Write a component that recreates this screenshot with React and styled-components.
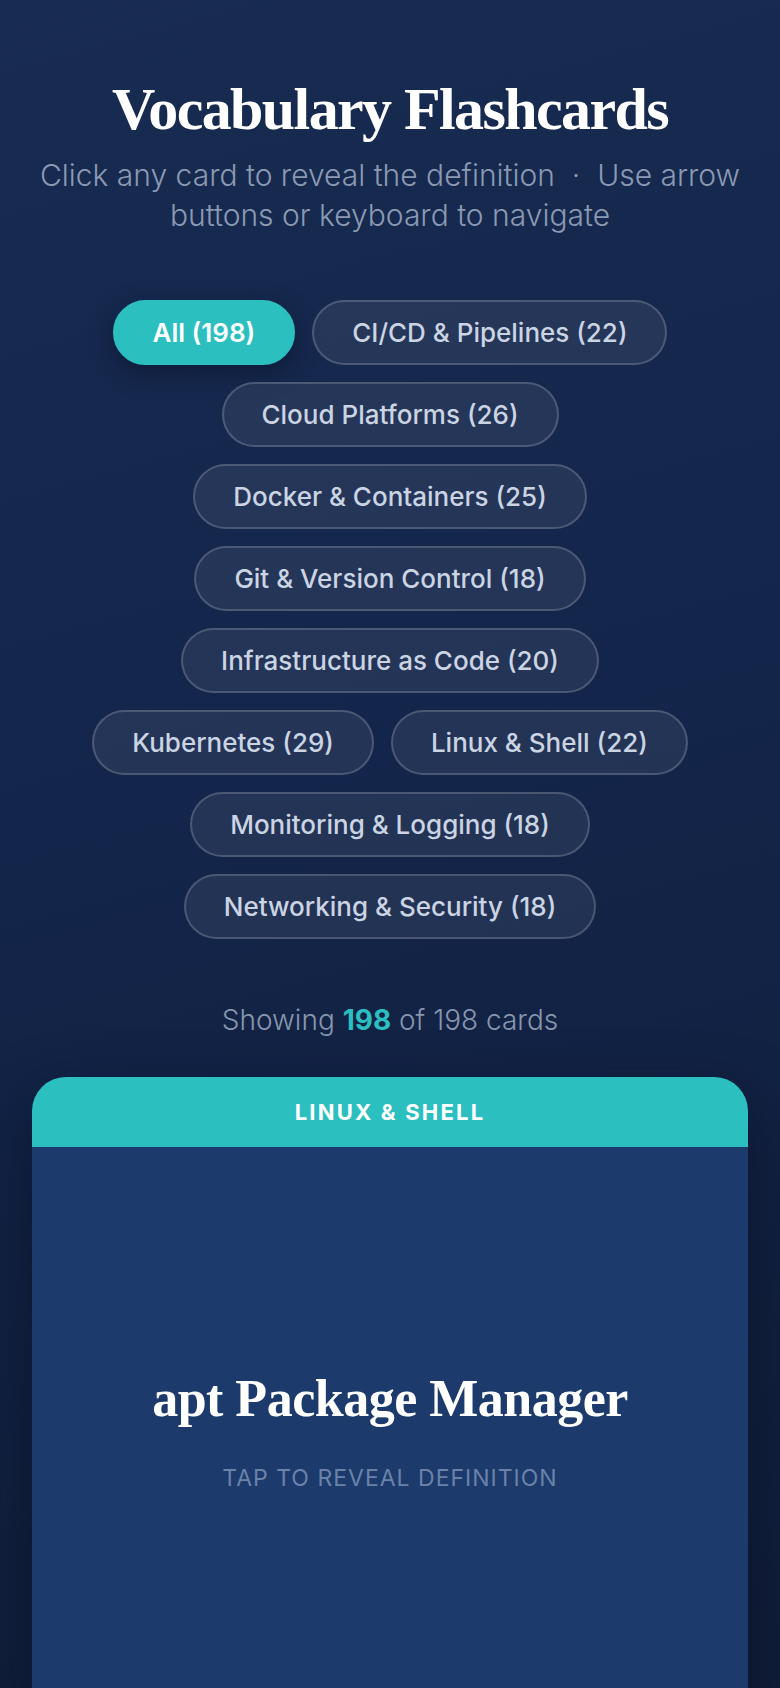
import React, { useState } from 'react';
import styled, { createGlobalStyle } from 'styled-components';

const GlobalStyle = createGlobalStyle`
 * {
  box-sizing: border-box;
 }
 html,
 body {
  margin: 0;
  padding: 0;
 }
 body {
  min-height: 100vh;
  background: linear-gradient(165deg, #182b51 0%, #13254a 45%, #101d38 100%);
  font-family: 'Inter', 'Liberation Sans', sans-serif;
  color: #fff;
 }
`;

const categories = [
 { name: 'CI/CD & Pipelines', count: 22 },
 { name: 'Cloud Platforms', count: 26 },
 { name: 'Docker & Containers', count: 25 },
 { name: 'Git & Version Control', count: 18 },
 { name: 'Infrastructure as Code', count: 20 },
 { name: 'Kubernetes', count: 29 },
 { name: 'Linux & Shell', count: 22 },
 { name: 'Monitoring & Logging', count: 18 },
 { name: 'Networking & Security', count: 18 },
];

const App = () => {
 const [active, setActive] = useState('All');
 const total = categories.reduce((sum, c) => sum + c.count, 0);

 return (
  <>
   <GlobalStyle />
   <Page>
    <Header>
     <Title>Vocabulary Flashcards</Title>
     <Subtitle>
      Click any card to reveal the definition &nbsp;·&nbsp; Use arrow buttons or keyboard to navigate
     </Subtitle>
    </Header>

    <Filters>
     <Chip $active={active === 'All'} onClick={() => setActive('All')}>
      All ({total})
     </Chip>
     {categories.map((c) => (
      <Chip key={c.name} $active={active === c.name} onClick={() => setActive(c.name)}>
       {c.name} ({c.count})
      </Chip>
     ))}
    </Filters>

    <Counter>
     Showing <strong>{total}</strong> of {total} cards
    </Counter>

    <Card>
     <CardTag>Linux &amp; Shell</CardTag>
     <CardBody>
      <Term>apt Package Manager</Term>
      <Hint>Tap to reveal definition</Hint>
     </CardBody>
    </Card>
   </Page>
  </>
 );
};

const Page = styled.main`
 padding: 75px 32px 0;
 display: flex;
 flex-direction: column;
 align-items: center;
`;

const Header = styled.header`
 text-align: center;
 display: flex;
 flex-direction: column;
 align-items: center;
 gap: 12px;
`;

const Title = styled.h1`
 margin: 0;
 font-family: 'Liberation Serif', 'DejaVu Serif', serif;
 font-weight: 700;
 font-size: 60px;
 line-height: 68px;
 letter-spacing: -1.6px;
 color: #ffffff;
`;

const Subtitle = styled.p`
 margin: 0;
 max-width: 716px;
 font-size: 30px;
 line-height: 40px;
 font-weight: 300;
 color: #8b99b3;
`;

const Filters = styled.nav`
 margin-top: 65px;
 width: 100%;
 max-width: 680px;
 display: flex;
 flex-wrap: wrap;
 justify-content: center;
 gap: 17px;
`;

const Chip = styled.button`
 height: 65px;
 padding: 0 38px;
 border-radius: 999px;
 font-family: 'Inter', 'Liberation Sans', sans-serif;
 font-size: 26px;
 font-weight: ${(p) => (p.$active ? 600 : 500)};
 color: ${(p) => (p.$active ? '#ffffff' : '#cbd4e3')};
 background: ${(p) => (p.$active ? '#2bbfbf' : 'rgba(255, 255, 255, 0.07)')};
 border: 2px solid ${(p) => (p.$active ? '#2bbfbf' : 'rgba(255, 255, 255, 0.18)')};
 box-shadow: ${(p) => (p.$active ? '0 8px 22px rgba(10, 18, 40, 0.55)' : 'none')};
 cursor: pointer;
`;

const Counter = styled.p`
 margin: 64px 0 0;
 font-size: 28px;
 line-height: 34px;
 font-weight: 300;
 color: #8796ad;

 strong {
  color: #2bbfbf;
  font-weight: 700;
 }
`;

const Card = styled.section`
 margin-top: 40px;
 width: 100%;
 border-radius: 34px 34px 0 0;
 overflow: hidden;
 background: #1c3a6b;
 box-shadow: 0 24px 60px rgba(5, 12, 30, 0.55);
`;

const CardTag = styled.div`
 height: 70px;
 display: flex;
 align-items: center;
 justify-content: center;
 background: #2bbfbf;
 color: #ffffff;
 font-size: 22px;
 font-weight: 700;
 letter-spacing: 2.2px;
 text-transform: uppercase;
`;

const CardBody = styled.div`
 min-height: 566px;
 display: flex;
 flex-direction: column;
 align-items: center;
 justify-content: center;
 gap: 35px;
 text-align: center;
`;

const Term = styled.h2`
 margin: 0;
 font-family: 'Liberation Serif', 'DejaVu Serif', serif;
 font-weight: 700;
 font-size: 52px;
 line-height: 60px;
 letter-spacing: -0.5px;
 color: #ffffff;
`;

const Hint = styled.span`
 font-size: 23px;
 line-height: 28px;
 letter-spacing: 1px;
 text-transform: uppercase;
 color: #6b82a8;
`;

export default App;
